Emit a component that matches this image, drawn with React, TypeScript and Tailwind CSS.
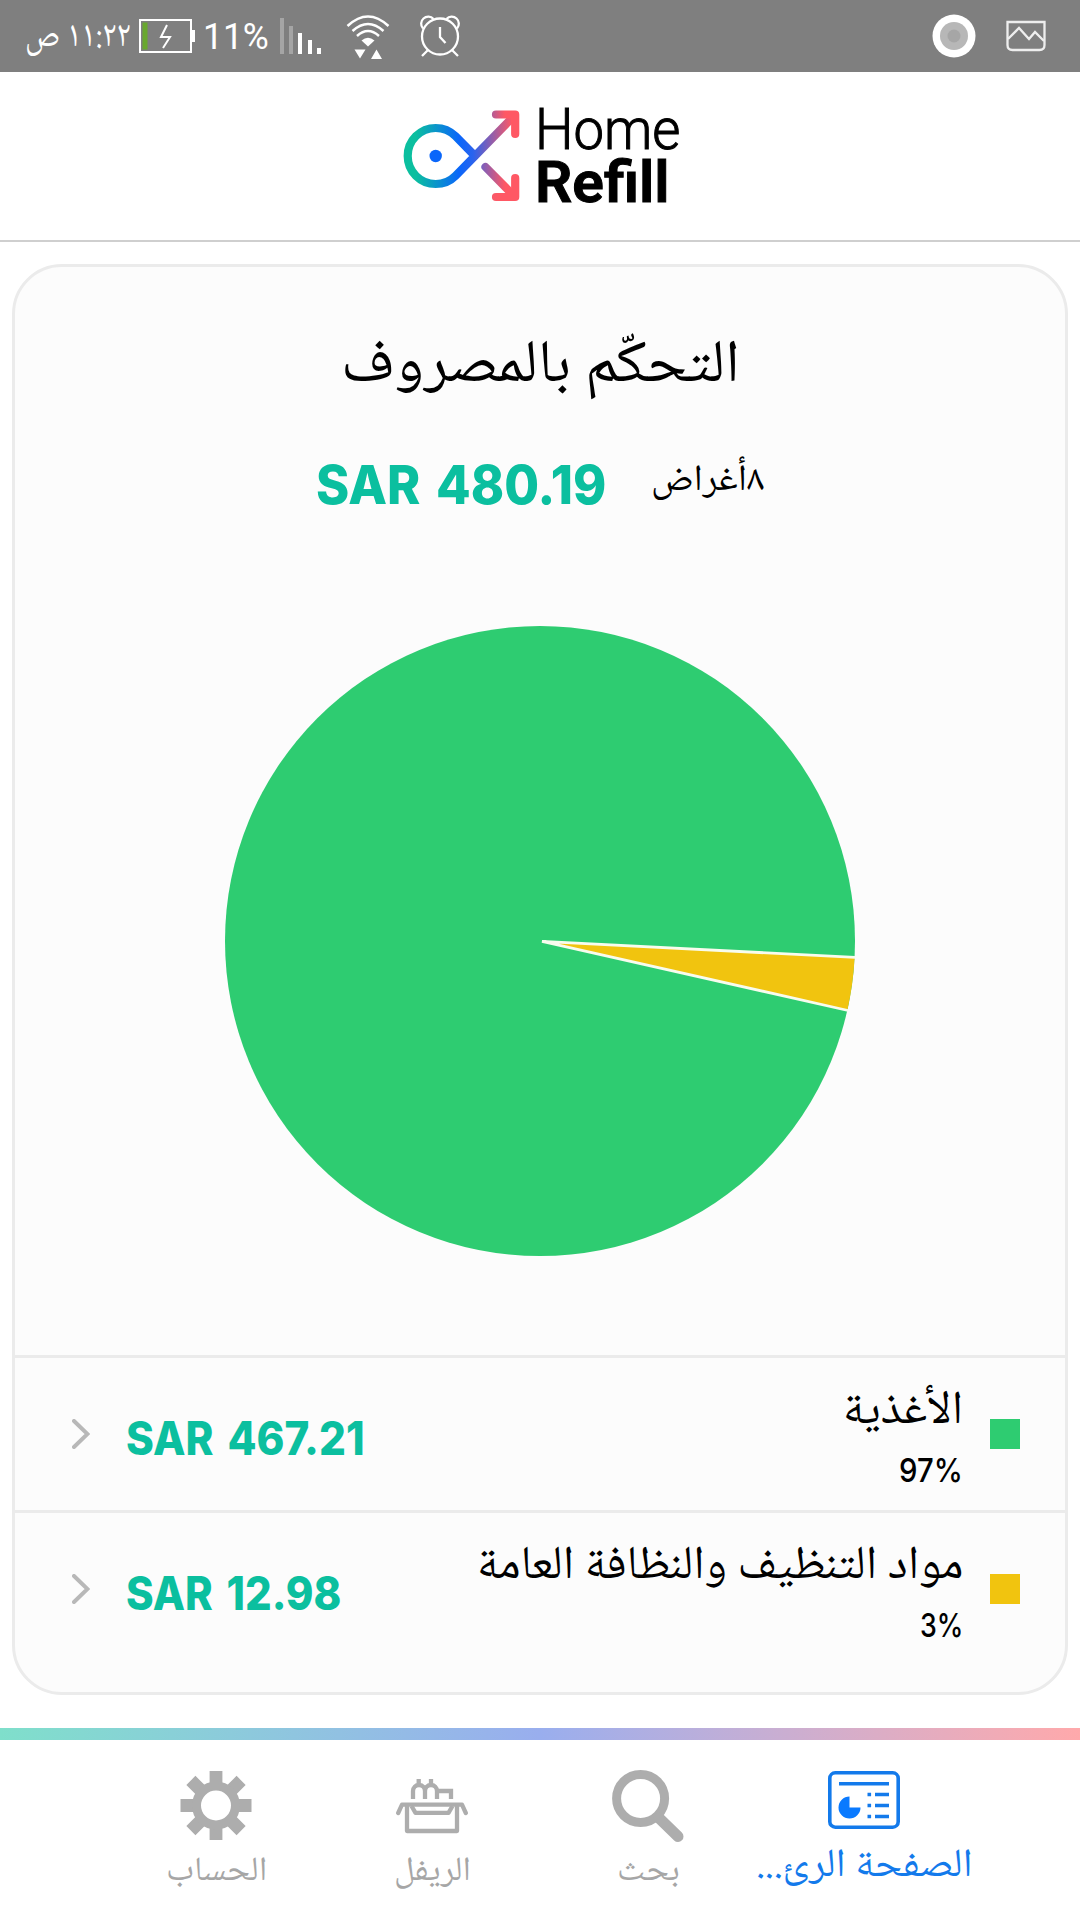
import { useLayoutEffect, useRef, useState } from "react";
import type { ReactNode } from "react";

interface Category {
  name: string;
  nameWidth: number;
  percent: string;
  percentWidth: number;
  amount: string;
  amountWidth: number;
  swatch: string;
}

const categories: Category[] = [
  {
    name: "الأغذية",
    nameWidth: 120,
    percent: "97%",
    percentWidth: 64,
    amount: "SAR 467.21",
    amountWidth: 239,
    swatch: "bg-[#2ecc71]",
  },
  {
    name: "مواد التنظيف والنظافة العامة",
    nameWidth: 486,
    percent: "3%",
    percentWidth: 43,
    amount: "SAR 12.98",
    amountWidth: 215,
    swatch: "bg-[#f1c40f]",
  },
];

const arabic =
  "font-['Noto_Naskh_Arabic','Noto_Sans_Arabic','DejaVu_Sans',sans-serif]";
const latin = "font-['Inter',sans-serif]";

interface FitTextProps {
  width: number;
  className?: string;
  rtl?: boolean;
  children: ReactNode;
}

// Squeezes or stretches a single line of text to a fixed width
function FitText({ width, className = "", rtl, children }: FitTextProps) {
  const ref = useRef<HTMLSpanElement>(null);
  const [scale, setScale] = useState(1);

  useLayoutEffect(() => {
    if (ref.current && ref.current.offsetWidth > 0) {
      setScale(width / ref.current.offsetWidth);
    }
  }, [width]);

  return (
    <div className={`flex justify-start ${className}`} style={{ width }}>
      <span
        ref={ref}
        dir={rtl ? "rtl" : "ltr"}
        className="block shrink-0 origin-left whitespace-nowrap"
        style={{ transform: `scaleX(${scale})` }}
      >
        {children}
      </span>
    </div>
  );
}

function StatusBar() {
  return (
    <div className="flex h-[72px] items-center bg-[#7f7f7f] pr-[34px] pl-[25px] text-white">
      <FitText
        width={106}
        rtl
        className={`pt-[3px] text-[37px] leading-[72px] ${arabic}`}
      >
        ١١:٢٢ ص
      </FitText>
      <svg className="ml-2" width="57" height="36" viewBox="0 0 57 36">
        <rect x="1" y="2" width="51" height="32" fill="none" stroke="#fff" strokeWidth="2" />
        <rect x="3.500" y="4.500" width="5" height="27" fill="#69a82f" />
        <rect x="53" y="12" width="3" height="12" fill="#fff" />
        <path d="M28 7l-6 12h9l-7 11" fill="none" stroke="#fff" strokeWidth="2" />
      </svg>
      <FitText
        width={66}
        className="ml-[7px] pt-[2px] font-['Roboto',sans-serif] text-[36px] leading-[74px]"
      >
        11%
      </FitText>
      <svg className="ml-[11px]" width="42" height="36" viewBox="0 0 42 36" fill="#fff">
        <rect x="0" y="0" width="4" height="36" opacity=".3" />
        <rect x="9" y="8" width="4" height="28" opacity=".3" />
        <rect x="18" y="15" width="4" height="21" />
        <rect x="28" y="22" width="4" height="14" />
        <rect x="37" y="30" width="4" height="6" />
      </svg>
      <svg className="ml-[24px]" width="44" height="48" viewBox="0 0 44 48">
        <g fill="none" stroke="#fff" strokeWidth="2.500">
          <path d="M1.500 14Q22-5 42.500 14" />
          <path d="M6.500 19Q22 5 37.500 19" />
          <path d="M11 24Q22 14 33 24" />
        </g>
        <path d="M15.500 28.500Q22 23 28.500 28.500L22 34.500Z" fill="#fff" />
        <path d="M8.500 37.500h11l-5.500 9zM25 47l5.500-9.500 5.500 9.500z" fill="#fff" />
      </svg>
      <svg className="ml-[29px]" width="42" height="46" viewBox="0 0 42 46">
        <g fill="none" stroke="#fff" strokeWidth="2.300">
          <circle cx="21" cy="23.500" r="18" />
          <path d="M4 15.500A6.500 6.500 0 1 1 14.500 6M27.500 6A6.500 6.500 0 1 1 38 15.500" />
          <path d="M9 37l-6 6M33 37l6 6M21 14v10l5.500 6" />
        </g>
      </svg>
      <svg className="ml-auto" width="44" height="44" viewBox="0 0 44 44">
        <circle cx="22" cy="22" r="21.500" fill="#fff" />
        <circle cx="22" cy="22" r="14" fill="#b7b7b7" />
        <circle cx="22" cy="22" r="6.500" fill="#a6a6a6" />
      </svg>
      <svg className="ml-[30px]" width="40" height="32" viewBox="0 0 40 32">
        <g fill="none" stroke="#eee" strokeWidth="2.300">
          <path d="M1.500 2h37v23q0 5-5 5h-27q-5 0-5-5z" />
          <path d="M2 19L13 8l10 11 6-7 9 9" />
        </g>
      </svg>
    </div>
  );
}

function Logo() {
  return (
    <div className="flex gap-[14px]">
      <svg width="120" height="98" viewBox="0 0 120 98">
        <defs>
          <linearGradient id="loop" gradientUnits="userSpaceOnUse" x1="3" y1="0" x2="118" y2="0">
            <stop offset="0.100" stopColor="#0bbf9f" />
            <stop offset="0.480" stopColor="#0a66fa" />
            <stop offset="0.600" stopColor="#2a63ee" />
            <stop offset="0.940" stopColor="#ff5864" />
          </linearGradient>
          <linearGradient id="head" gradientUnits="userSpaceOnUse" x1="78" y1="0" x2="104" y2="0">
            <stop offset="0" stopColor="#6a60c8" />
            <stop offset="1" stopColor="#ff5864" />
          </linearGradient>
          <linearGradient id="tip" gradientUnits="userSpaceOnUse" x1="84" y1="0" x2="98" y2="0">
            <stop offset="0" stopColor="#f05a70" />
            <stop offset="1" stopColor="#ff5864" />
          </linearGradient>
        </defs>
        <g fill="none" strokeWidth="8.200" strokeLinecap="round" strokeLinejoin="round">
          <path
            d="M113 8L54.500 67.800A28 28 0 1 1 54.500 28.200L74 48"
            stroke="url(#loop)"
          />
          <path d="M95 6.500H114.200V26" stroke="url(#head)" />
          <path d="M84.500 59L113 88" stroke="url(#head)" />
          <path d="M95 89H114.200V70" stroke="url(#tip)" />
        </g>
        <circle cx="34.700" cy="48" r="6.200" fill="#0a66fa" />
      </svg>
      <div className="flex flex-col font-['Roboto',sans-serif] text-[57px] text-black">
        <FitText
          width={145}
          className="h-[53px] pt-px leading-[42px] font-light [-webkit-text-stroke:1px_black]"
        >
          Home
        </FitText>
        <FitText
          width={135}
          className="leading-[44px] font-semibold [-webkit-text-stroke:1px_black]"
        >
          Refill
        </FitText>
      </div>
    </div>
  );
}

function SpendingPie() {
  return (
    <svg width="630" height="630" viewBox="-315 -315 630 630">
      <circle r="315" fill="#2ecc71" />
      <path
        d="M2 0.300L314.600 16.500A315 315 0 0 1 307.300 69.500Z"
        fill="#f1c40f"
      />
      <path
        d="M316 16.500L2 0.300L308 69.500"
        fill="none"
        stroke="#f8fcee"
        strokeWidth="2.800"
      />
    </svg>
  );
}

function CategoryRow({ category }: { category: Category }) {
  return (
    <div className="flex h-[155px] items-center border-t-[3px] border-[#ebebeb] pr-[45px] pl-[57px]">
      <svg width="18" height="30" viewBox="0 0 18 30">
        <path
          d="M2 2l13.500 13L2 28"
          fill="none"
          stroke="#b8b8b8"
          strokeWidth="4"
          strokeLinecap="round"
        />
      </svg>
      <FitText
        width={category.amountWidth}
        className={`ml-[36px] pt-[8px] text-[46px] leading-[60px] font-extrabold [word-spacing:5px] text-[#0bbf9f] ${latin}`}
      >
        {category.amount}
      </FitText>
      <div className="mr-[27px] ml-auto flex flex-col items-end self-start pt-[25px] text-black">
        <FitText
          width={category.nameWidth}
          rtl
          className={`text-[47px] leading-[60px] ${arabic}`}
        >
          {category.name}
        </FitText>
        <FitText
          width={category.percentWidth}
          className={`mt-[7px] text-[33px] leading-[40px] font-medium ${latin}`}
        >
          {category.percent}
        </FitText>
      </div>
      <div className={`h-[30px] w-[30px] ${category.swatch}`} />
    </div>
  );
}

function GearIcon() {
  return (
    <svg width="72" height="72" viewBox="0 0 72 72">
      <g stroke="#adadad" strokeWidth="12.800">
        <path d="M36 1v15M36 55v15M.500 35.500h15M56.500 35.500h15M10.900 10.400l11 11M50.100 49.600l11 11M10.900 60.600l11-11M50.100 21.400l11-11" />
        <circle cx="36" cy="35.500" r="19.500" fill="none" strokeWidth="9" />
      </g>
    </svg>
  );
}

function BoxIcon() {
  return (
    <svg width="72" height="72" viewBox="0 0 72 72">
      <g fill="none" stroke="#adadad" strokeWidth="4.300">
        <path d="M17 29V21a6 6 0 0 1 12 0v8M29 21a6 6 0 0 1 12 0v8M41 21h14v8M22.700 9v7M35 9v7" />
        <path d="M2.200 43L6 34.700h60L69.800 43" strokeLinecap="round" strokeLinejoin="round" />
        <path d="M11 35v26h50V35M15.500 36l4 6.800h33l4-6.800" strokeLinejoin="round" />
      </g>
    </svg>
  );
}

function SearchIcon() {
  return (
    <svg width="72" height="72" viewBox="0 0 72 72">
      <g fill="none" stroke="#adadad">
        <circle cx="28.600" cy="28.500" r="24" strokeWidth="9" />
        <path d="M47 48l19 18.500" strokeWidth="11" strokeLinecap="round" />
      </g>
    </svg>
  );
}

function HomeIcon() {
  return (
    <svg width="72" height="72" viewBox="0 0 72 72">
      <g fill="none" stroke="#137aeb" strokeWidth="3.600">
        <rect x="1.800" y="2.800" width="68.400" height="54.400" rx="5.500" />
        <path d="M11 13.700h50M47 24.500h14M47 35.500h14M47 46.500h14M39.500 24.500h3.600M39.500 35.500h3.600M39.500 46.500h3.600" />
      </g>
      <path d="M21.500 26.500V37.500H32.500A11 11 0 1 1 21.500 26.500Z" fill="#0a7aff" />
    </svg>
  );
}

function TabBar() {
  return (
    <nav className="flex h-[180px] justify-center bg-white pt-[30px]">
      <Tab icon={<GearIcon />} label="الحساب" width={101} />
      <Tab icon={<BoxIcon />} label="الريفل" width={77} />
      <Tab icon={<SearchIcon />} label="بحث" width={63} />
      <Tab icon={<HomeIcon />} label="الصفحة الرئ..." width={217} active />
    </nav>
  );
}

interface TabProps {
  icon: ReactNode;
  label: string;
  width: number;
  active?: boolean;
}

function Tab({ icon, label, width, active }: TabProps) {
  return (
    <div className="flex w-[216px] flex-col items-center">
      {icon}
      <FitText
        width={width}
        rtl
        className={`${arabic} leading-[50px] ${
          active
            ? "text-[40px] text-[#137aeb]"
            : "mt-[6px] text-[34px] text-[#a6a6a6]"
        }`}
      >
        {label}
      </FitText>
    </div>
  );
}

export default function App() {
  return (
    <div className="flex h-[1920px] w-[1080px] flex-col overflow-hidden bg-white">
      <StatusBar />
      <header className="flex h-[170px] justify-center border-b-2 border-[#cfcfcf] pt-[36px]">
        <Logo />
      </header>

      <main className="mx-[12px] mt-[22px] h-[1431px] rounded-[50px] border-[3px] border-[#ebebeb] bg-[#fcfcfc]">
        <section className="flex h-[1088px] flex-col items-center pt-[61px]">
          <FitText
            width={399}
            rtl
            className={`text-[60px] leading-[80px] text-black ${arabic}`}
          >
            التحكّم بالمصروف
          </FitText>
          <div className="mt-[37px] flex h-[80px] justify-center gap-[45px]">
            <FitText
              width={290}
              className={`text-[53px] leading-[80px] font-extrabold [word-spacing:5px] text-[#0bbf9f] ${latin}`}
            >
              SAR 480.19
            </FitText>
            <FitText
              width={113}
              rtl
              className={`pt-[3px] text-[37px] leading-[68px] text-black ${arabic}`}
            >
              ٨أغراض
            </FitText>
          </div>
          <div className="mt-[101px]">
            <SpendingPie />
          </div>
        </section>
        {categories.map((category) => (
          <CategoryRow key={category.name} category={category} />
        ))}
      </main>

      <div className="mt-[33px] h-[12px] bg-linear-to-r from-[#7fdfcb] via-[#99aeee] to-[#ffa9ab]" />
      <TabBar />
    </div>
  );
}
